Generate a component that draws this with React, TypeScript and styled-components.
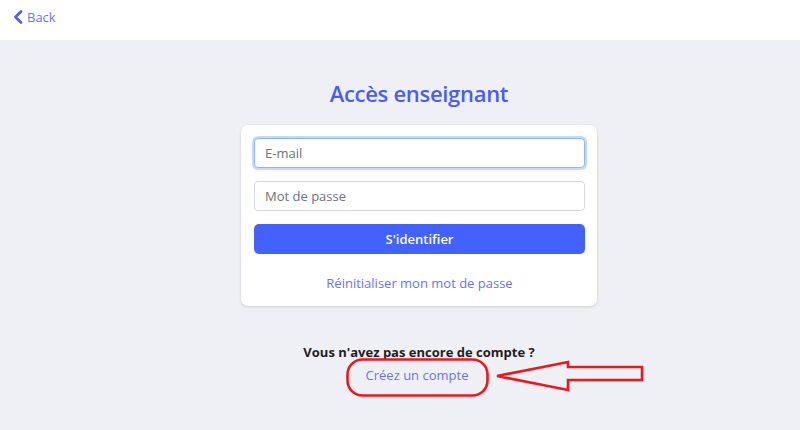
import React from 'react';
import styled, { createGlobalStyle } from 'styled-components';

const Global = createGlobalStyle`
  html, body {
    margin: 0;
    padding: 0;
    min-height: 100%;
    background: #eff0f5;
    font-family: "Open Sans", "Noto Sans", sans-serif;
  }
`;

export default function App() {
  return (
    <>
      <Global />
      <Header>
        <BackLink>
          <svg width="10" height="14" viewBox="0 0 10 14">
            <path d="M8 1.5 L2.5 7 L8 12.5" fill="none" stroke="#4a5cf5" strokeWidth="2.6" strokeLinecap="round" strokeLinejoin="round" />
          </svg>
          Back
        </BackLink>
      </Header>
      <Main>
        <Title>Accès enseignant</Title>
        <Card>
          <Input placeholder="E-mail" focused />
          <Input placeholder="Mot de passe" type="password" />
          <Button>S'identifier</Button>
          <ResetLink>Réinitialiser mon mot de passe</ResetLink>
        </Card>
        <Question>Vous n'avez pas encore de compte ?</Question>
        <CreateWrap>
          <CreateLink>Créez un compte</CreateLink>
          <Annotation width="300" height="40" viewBox="0 0 300 40">
            <rect x="1.5" y="1.5" width="140" height="36" rx="15" ry="15" fill="none" stroke="#e8191f" strokeWidth="2.6" />
            <path d="M151 18 L222 4 L222 9 L296 9 L296 22 L222 22 L222 32 Z" fill="none" stroke="#e8191f" strokeWidth="2.6" strokeLinejoin="miter" />
          </Annotation>
        </CreateWrap>
      </Main>
    </>
  );
}

const Header = styled.header`
  height: 40px;
  background: #ffffff;
  display: flex;
  align-items: center;
  padding-left: 13px;
  box-sizing: border-box;
`;

const BackLink = styled.a`
  display: flex;
  align-items: center;
  gap: 4px;
  color: #6b73f0;
  font-size: 13px;
  cursor: pointer;
  margin-top: -6px;
`;

const Main = styled.main`
  display: flex;
  flex-direction: column;
  align-items: center;
  padding: 38px 0 60px 38px;
`;

const Title = styled.h1`
  margin: 0 0 17px;
  font-size: 22px;
  font-weight: 600;
  color: #4a5cf5;
  letter-spacing: -0.3px;
  line-height: 30px;
`;

const Card = styled.div`
  width: 356px;
  box-sizing: border-box;
  background: #ffffff;
  border-radius: 7px;
  box-shadow: 0 1px 3px rgba(0, 0, 0, 0.15);
  padding: 13px 12px 14px 13px;
  display: flex;
  flex-direction: column;
  gap: 13px;
`;

const Input = styled.input<{ focused?: boolean }>`
  height: 30px;
  box-sizing: border-box;
  border: 1px solid ${p => (p.focused ? '#8fb6ff' : '#d5d8de')};
  box-shadow: ${p => (p.focused ? '0 0 0 2px #c4dafe' : 'none')};
  border-radius: 4px;
  padding: 0 10px;
  font-family: inherit;
  font-size: 13px;
  outline: none;
  &::placeholder {
    color: #6c727c;
  }
`;

const Button = styled.button`
  height: 30px;
  border: none;
  border-radius: 5px;
  background: #4361fd;
  color: #ffffff;
  font-family: inherit;
  font-size: 13px;
  font-weight: 600;
`;

const Link = styled.a`
  display: block;
  text-align: center;
  color: #6b73f0;
  font-size: 13px;
  line-height: 18px;
  cursor: pointer;
`;

const ResetLink = styled(Link)`
  margin-top: 7px;
`;

const CreateLink = styled(Link)`
  margin-top: 5px;
`;

const Question = styled.p`
  margin: 37px 0 0;
  font-size: 13px;
  line-height: 18px;
  font-weight: 700;
  color: #1e1e24;
`;

const CreateWrap = styled.div`
  position: relative;
  margin-left: -4px;
`;

const Annotation = styled.svg`
  position: absolute;
  left: -20px;
  top: -3px;
  overflow: visible;
  pointer-events: none;
`;
